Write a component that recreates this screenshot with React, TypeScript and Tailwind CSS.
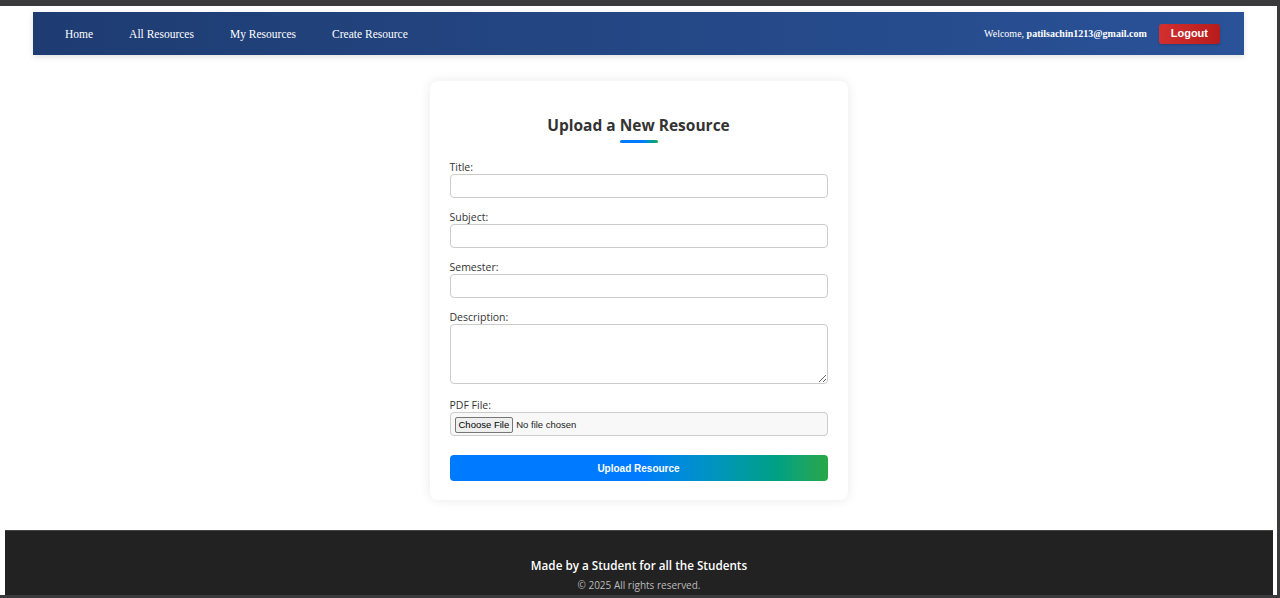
import { useState } from 'react'

const navLinks = ['Home', 'All Resources', 'My Resources', 'Create Resource']

function Navbar() {
  return (
    <nav className="mx-[33px] h-[43px] flex items-center justify-between pl-[32px] pr-[24px] bg-gradient-to-r from-[#1e3c72] to-[#2a5298] shadow-[0_2px_6px_rgba(0,0,0,0.12)] font-['Liberation_Serif',serif]">
      <ul className="flex items-center gap-[36px] pb-[2px]">
        {navLinks.map(link => (
          <li key={link}>
            <a href="#" className="text-[11.5px] text-white no-underline">
              {link}
            </a>
          </li>
        ))}
      </ul>
      <div className="flex items-center gap-[12px]">
        <span className="text-[10px] text-white pb-[1px]">
          Welcome, <strong className="font-bold">patilsachin1213@gmail.com</strong>
        </span>
        <button className="h-[20px] px-[12px] rounded-[3px] bg-gradient-to-r from-[#d32f2f] to-[#b71c1c] text-white text-[11px] font-bold font-['Liberation_Sans',Arial,sans-serif] shadow-[0_1px_2px_rgba(0,0,0,0.2)]">
          Logout
        </button>
      </div>
    </nav>
  )
}

function Field({ label, children, last }: { label: string; children: React.ReactNode; last?: boolean }) {
  return (
    <div className={last ? 'mb-[19px]' : 'mb-[10px]'}>
      <label className="block text-[10.5px] leading-[13px] pt-[3px] text-[#333]">{label}</label>
      {children}
    </div>
  )
}

function UploadCard() {
  const [form, setForm] = useState({ title: '', subject: '', semester: '', description: '' })
  const inputCls = 'block w-full h-[24px] px-[6px] text-[11px] border border-[#ccc] rounded-[4px] bg-white outline-none'

  return (
    <div className="w-[418px] mx-auto bg-white rounded-[8px] shadow-[0_0_12px_rgba(0,0,0,0.09)] px-[20px] pt-[33px] pb-[19px] font-['Open_Sans','Noto_Sans',sans-serif]">
      <h2 className="text-center text-[15.5px] leading-[22px] font-bold text-[#333]">Upload a New Resource</h2>
      <div className="mx-auto mt-[4px] mb-[15px] w-[38px] h-[3px] rounded-full bg-gradient-to-r from-[#007bff] from-60% to-[#28a745]" />

      <Field label="Title:">
        <input className={inputCls} value={form.title} onChange={e => setForm({ ...form, title: e.target.value })} />
      </Field>
      <Field label="Subject:">
        <input className={inputCls} value={form.subject} onChange={e => setForm({ ...form, subject: e.target.value })} />
      </Field>
      <Field label="Semester:">
        <input className={inputCls} value={form.semester} onChange={e => setForm({ ...form, semester: e.target.value })} />
      </Field>
      <div className="mb-[12px]">
        <label className="block text-[10.5px] leading-[13px] pt-[3px] text-[#333]">Description:</label>
        <textarea
          className="block w-full h-[60px] px-[6px] py-[4px] text-[11px] border border-[#ccc] rounded-[4px] bg-white outline-none resize-y"
          value={form.description}
          onChange={e => setForm({ ...form, description: e.target.value })}
        />
      </div>
      <Field label="PDF File:" last>
        <input
          type="file"
          accept="application/pdf"
          className="block w-full h-[24px] px-[4px] py-[4px] text-[9.5px] font-['Liberation_Sans',Arial,sans-serif] text-[#222] border border-[#ccc] rounded-[4px] bg-[#f8f8f8] file:mr-[3px] file:px-[3px] file:border file:border-[#767676] file:rounded-[2px] file:bg-[#efefef] file:text-[9.5px] file:text-black"
        />
      </Field>

      <button className="block w-full h-[26px] rounded-[4px] bg-gradient-to-r from-[#007bff] from-50% to-[#28a745] text-white text-[10px] font-bold font-['Liberation_Sans',Arial,sans-serif]">
        Upload Resource
      </button>
    </div>
  )
}

function Footer() {
  return (
    <footer className="ml-[5px] mr-[4px] h-[65px] bg-[#222] border-t border-[#444] flex flex-col items-center pt-[26px] font-['Open_Sans','Noto_Sans',sans-serif]">
      <p className="text-[11.7px] leading-[16px] font-semibold text-white">Made by a Student for all the Students</p>
      <p className="mt-[5px] text-[10px] leading-[14px] text-[#bbb]">© 2025 All rights reserved.</p>
    </footer>
  )
}

export default function App() {
  return (
    <div className="bg-[#3a3a3c] pt-[6px] pr-[3px] pb-[3px]">
      <div className="bg-white pt-[6px]">
        <Navbar />
        <main className="pt-[26px] pb-[30px]">
          <UploadCard />
        </main>
        <Footer />
      </div>
    </div>
  )
}
